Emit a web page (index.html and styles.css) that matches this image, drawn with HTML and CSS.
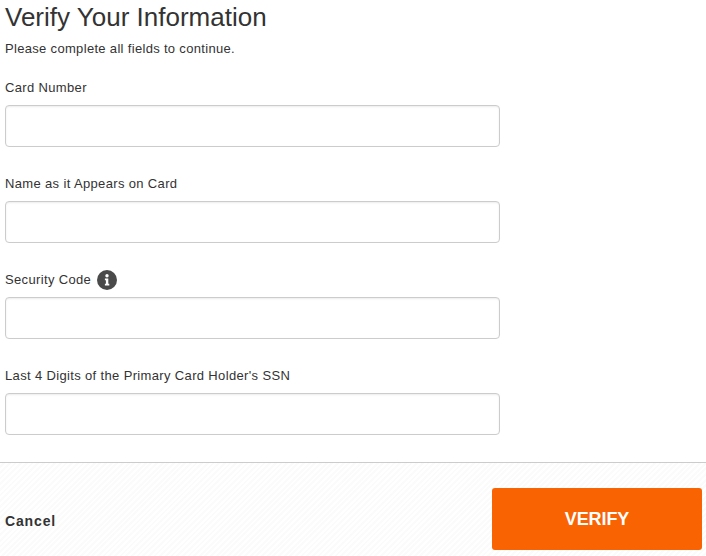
FILE: index.html
```html
<!DOCTYPE html>
<html lang="en">
<head>
    <meta charset="UTF-8">
    <title>Verify Your Information</title>
    <link rel="stylesheet" href="styles.css">
</head>
<body>
    <form class="verify">
        <div class="verify-body">
            <h1 class="title">Verify Your Information</h1>
            <p class="intro">Please complete all fields to continue.</p>
            <div class="field">
                <label class="label" for="card">Card Number</label>
                <input class="input" id="card" type="text">
            </div>
            <div class="field">
                <label class="label" for="name">Name as it Appears on Card</label>
                <input class="input" id="name" type="text">
            </div>
            <div class="field">
                <label class="label" for="code">Security Code
                    <svg class="info" viewBox="0 0 20 20" width="20" height="20">
                        <circle cx="10" cy="10" r="10" fill="#4a4a4a"/>
                        <circle cx="10" cy="5.8" r="1.7" fill="#fff"/>
                        <path d="M7.9 8.6h3.4v5.2h1v1.6H7.9v-1.6h1v-3.6h-1z" fill="#fff"/>
                    </svg>
                </label>
                <input class="input" id="code" type="text">
            </div>
            <div class="field">
                <label class="label" for="ssn">Last 4 Digits of the Primary Card Holder's SSN</label>
                <input class="input" id="ssn" type="text">
            </div>
        </div>
        <div class="actions">
            <a class="cancel" href="#">Cancel</a>
            <button class="submit" type="button">VERIFY</button>
        </div>
    </form>
</body>
</html>
```

FILE: styles.css
```css
body {
    margin: 0;
    height: 556px;
    overflow: hidden;
    background: #fff;
    font-family: "Liberation Sans", Arial, sans-serif;
    color: #333;
}
.verify-body {
    padding: 0 5px;
    height: 462px;
}
.title {
    margin: 0;
    font-size: 26px;
    font-weight: 400;
    line-height: 34px;
    color: #333;
}
.intro {
    margin: 6px 0 0;
    font-size: 13px;
    line-height: 18px;
    letter-spacing: 0.32px;
}
.field {
    margin-bottom: 26px;
    width: 495px;
}
.intro + .field {
    margin-top: 19px;
}
.label {
    display: flex;
    align-items: center;
    gap: 6px;
    height: 20px;
    margin-bottom: 8px;
    font-size: 13px;
    letter-spacing: 0.35px;
}
.info {
    margin-top: 2px;
}
.input {
    display: block;
    box-sizing: border-box;
    width: 100%;
    height: 42px;
    border: 1px solid #ccc;
    border-radius: 4px;
    background: #fff;
    box-shadow: inset 0 1px 2px rgba(0, 0, 0, 0.08);
}
.actions {
    display: flex;
    justify-content: space-between;
    align-items: center;
    box-sizing: border-box;
    height: 94px;
    padding: 25px 4px 6px 5px;
    border-top: 1px solid #ccc;
    background: repeating-linear-gradient(135deg, #fff, #fff 2px, #fbfbfb 2px, #fbfbfb 4px);
}
.cancel {
    margin-top: 4px;
    font-size: 14px;
    font-weight: 700;
    letter-spacing: 0.85px;
    color: #333;
    text-decoration: none;
}
.submit {
    width: 210px;
    height: 62px;
    border: none;
    border-radius: 3px;
    background: #f96302;
    color: #fff;
    font-family: inherit;
    font-size: 18px;
    font-weight: 700;
    letter-spacing: -0.1px;
}
```
